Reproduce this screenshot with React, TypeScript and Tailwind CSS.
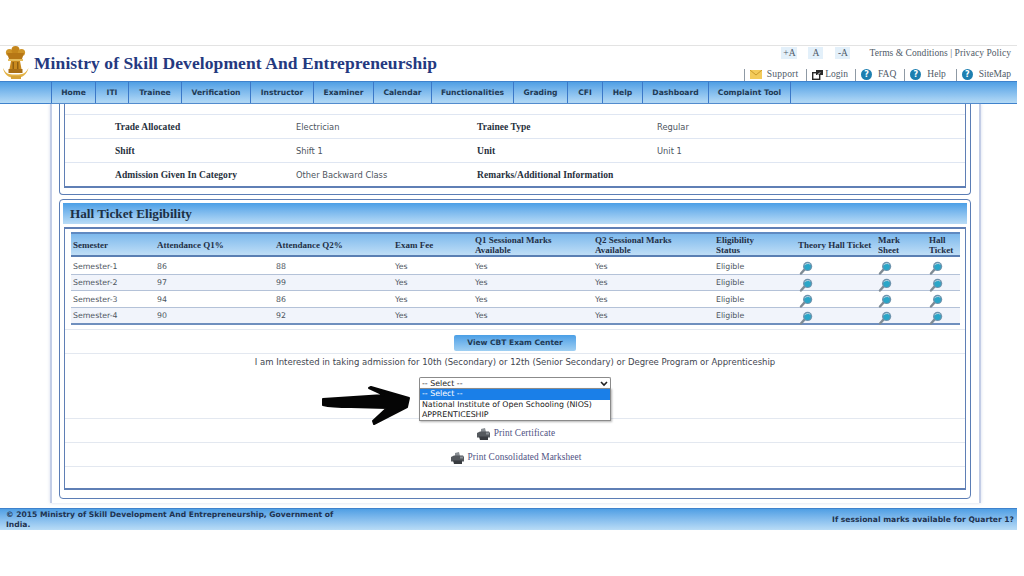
const serif = "font-['Liberation_Serif',serif]";
const sans = "font-['DejaVu_Sans',sans-serif]";

const navItems = [
  { label: "Home", w: "w-[44px]" },
  { label: "ITI", w: "w-[33px]" },
  { label: "Trainee", w: "w-[53px]" },
  { label: "Verification", w: "w-[69px]" },
  { label: "Instructor", w: "w-[63px]" },
  { label: "Examiner", w: "w-[60px]" },
  { label: "Calendar", w: "w-[58px]" },
  { label: "Functionalities", w: "w-[82px]" },
  { label: "Grading", w: "w-[54px]" },
  { label: "CFI", w: "w-[35px]" },
  { label: "Help", w: "w-[40px]" },
  { label: "Dashboard", w: "w-[66px]" },
  { label: "Complaint Tool", w: "w-[82px]" },
];

const semesters = [
  { name: "Semester-1", q1: "86", q2: "88" },
  { name: "Semester-2", q1: "97", q2: "99" },
  { name: "Semester-3", q1: "94", q2: "86" },
  { name: "Semester-4", q1: "90", q2: "92" },
];

const cols =
  "grid grid-cols-[84px_119px_119px_80px_120px_121px_82px_80px_51px_33px]";

function Emblem() {
  return (
    <svg width="27" height="34" viewBox="0 0 27 34" className="shrink-0">
      <circle cx="7.500" cy="6.500" r="3.600" fill="#cf9528" />
      <circle cx="13.500" cy="4" r="4" fill="#c4861c" />
      <circle cx="19.500" cy="6.500" r="3.600" fill="#cf9528" />
      <path d="M5 7h17l-2 6H7z" fill="#b67716" />
      <path d="M6 13h15v2H6z" fill="#e6bd5c" />
      <path d="M9 15h9l1.500 8h-12z" fill="#c98a1e" />
      <path d="M10.500 16h1.500v7h-1.500zM15 16h1.500v7H15z" fill="#8f5f12" />
      <path d="M6.500 23h14v4h-14z" fill="#a86f16" />
      <path d="M1 22c1 6 5 10 12.500 10S25 28 26.500 22c-2 3-3.500 5.500-6.500 6-4 .7-9 .7-13 0-3-.5-4-3-6-6z" fill="#e3b244" />
      <path d="M9 30h10v3H9z" fill="#d6a338" />
    </svg>
  );
}

function Magnifier() {
  return (
    <svg width="14" height="14" viewBox="0 0 14 14">
      <path d="M2 12.500l3.200-3.600" stroke="#7f8c96" strokeWidth="2.400" strokeLinecap="round" />
      <circle cx="8.600" cy="5.400" r="4.600" fill="#6d93ad" />
      <circle cx="8.600" cy="5.800" r="3.200" fill="#2aa6c8" />
      <path d="M5.600 4.200c.8-1.500 3.500-2.400 5.600-1" stroke="#b9d6e4" strokeWidth="1" fill="none" />
    </svg>
  );
}

function Printer() {
  return (
    <svg width="13" height="12" viewBox="0 0 13 12">
      <path d="M4 1l4-1 1 4H4z" fill="#8a8f94" />
      <path d="M0 5l3-1.500h9l1 1.500v4.500H0z" fill="#55595e" />
      <path d="M2 8.500h9V12H3z" fill="#383b40" />
      <path d="M9 4.500h3v2H9z" fill="#8b9096" />
    </svg>
  );
}

function HelpIcon() {
  return (
    <span className={`flex h-[11px] w-[11px] items-center justify-center rounded-full bg-[#1d7fb0] text-[8px] font-bold leading-none text-white ${sans}`}>
      ?
    </span>
  );
}

function MailIcon() {
  return (
    <svg width="12" height="9" viewBox="0 0 12 9">
      <rect width="12" height="9" fill="#f3cb5a" />
      <path d="M0 0l6 5 6-5" stroke="#c99a2c" strokeWidth="1" fill="none" />
    </svg>
  );
}

function LoginIcon() {
  return (
    <svg width="11" height="10" viewBox="0 0 11 10">
      <rect x="0.700" y="2.700" width="7" height="6.600" fill="#fff" stroke="#2a2a2a" strokeWidth="1.400" />
      <rect x="4" y="0" width="7" height="5" fill="#2a2a2a" />
      <path d="M5 5.500l3-3" stroke="#fff" strokeWidth="1" />
    </svg>
  );
}

function Sep({ className }: { className: string }) {
  return <span className={`h-[12px] w-px bg-[#8f9aa5] ${className}`} />;
}

function Header() {
  return (
    <header className="flex h-[36px] w-[1017px] justify-between border-t border-[#e3e3e3] pl-[2px] pr-[6px]">
      <div className="flex items-start">
        <Emblem />
        <h1 className={`ml-[5px] mt-[7px] text-[17.500px] leading-[20px] font-bold tracking-[0.09px] text-[#24397f] ${serif}`}>
          Ministry of Skill Development And Entrepreneurship
        </h1>
      </div>
      <div className={`flex flex-col items-end text-[#4f5a68] ${serif}`}>
        <div className="mt-[1px] flex h-[12px] items-center text-[9.500px]">
          <span className="flex h-[12px] w-[16px] items-center justify-center bg-[#e3f0fa]">+A</span>
          <span className="ml-[11px] flex h-[12px] w-[15px] items-center justify-center bg-[#e3f0fa]">A</span>
          <span className="ml-[12px] flex h-[12px] w-[15px] items-center justify-center bg-[#e3f0fa]">-A</span>
          <span className="ml-[19px] tracking-[0.05px]">Terms &amp; Conditions | Privacy Policy</span>
        </div>
        <div className="mt-[9px] flex h-[13px] items-center text-[9.500px]">
          <Sep className="mr-[5px]" />
          <MailIcon />
          <span className="ml-[5px] tracking-[0.2px]">Support</span>
          <Sep className="ml-[8px] mr-[5px]" />
          <LoginIcon />
          <span className="ml-[2px]">Login</span>
          <Sep className="ml-[7px] mr-[5px]" />
          <HelpIcon />
          <span className="ml-[6px]">FAQ</span>
          <Sep className="ml-[8px] mr-[5px]" />
          <HelpIcon />
          <span className="ml-[6px]">Help</span>
          <Sep className="ml-[10px] mr-[5px]" />
          <HelpIcon />
          <span className="ml-[6px]">SiteMap</span>
        </div>
      </div>
    </header>
  );
}

function Nav() {
  return (
    <nav className="flex h-[23px] w-[1017px] border-y border-[#3f82cc] bg-gradient-to-b from-[#4f9fe4] to-[#b4daf6] pl-[51px]">
      {navItems.map((item) => (
        <div
          key={item.label}
          className={`flex items-center justify-center border-l border-[#3b78c8] text-[7.600px] font-bold text-[#1f3a55] ${sans} ${item.w}`}
        >
          {item.label}
        </div>
      ))}
      <div className="border-l border-[#3b78c8]" />
    </nav>
  );
}

function InfoRow({ a, b, c, d }: { a: string; b: string; c: string; d?: string }) {
  return (
    <div className="grid h-[24px] grid-cols-[181px_181px_180px_1fr] items-center border-t border-[#dfe6f2] pl-[50px] pt-[2px]">
      <span className={`text-[9.500px] font-bold tracking-[0.05px] text-[#26303c] ${serif}`}>{a}</span>
      <span className={`text-[8.300px] text-[#4d5560] ${sans}`}>{b}</span>
      <span className={`text-[9.500px] font-bold tracking-[0.05px] text-[#26303c] ${serif}`}>{c}</span>
      <span className={`text-[8.300px] text-[#4d5560] ${sans}`}>{d}</span>
    </div>
  );
}

function HallTable() {
  const head = `flex items-center text-[9px] font-bold leading-[10px] text-[#1f2f46] ${serif}`;
  return (
    <div className="ml-[6px] mr-[5px] border-b-2 border-[#6f8fbe]">
      <div className={`${cols} h-[25px] border-y-2 border-t-[#5f8ac2] border-b-[#5a7fb3] bg-gradient-to-b from-[#7db9ec] to-[#bfdef6] pl-[2px]`}>
        <span className={head}>Semester</span>
        <span className={head}>Attendance Q1%</span>
        <span className={head}>Attendance Q2%</span>
        <span className={head}>Exam Fee</span>
        <span className={head}>Q1 Sessional Marks<br />Available</span>
        <span className={head}>Q2 Sessional Marks<br />Available</span>
        <span className={head}>Eligibility<br />Status</span>
        <span className={head}>Theory Hall Ticket</span>
        <span className={head}>Mark<br />Sheet</span>
        <span className={head}>Hall<br />Ticket</span>
      </div>
      {semesters.map((s, i) => (
        <div
          key={s.name}
          className={`${cols} h-[16.500px] items-center border-t pl-[2px] text-[7.800px] text-[#4d5560] ${sans} ${i % 2 ? "bg-[#f1f4fb]" : "bg-white"} ${i ? "border-[#b4c2d8]" : "border-transparent"}`}
        >
          <span>{s.name}</span>
          <span>{s.q1}</span>
          <span>{s.q2}</span>
          <span>Yes</span>
          <span>Yes</span>
          <span>Yes</span>
          <span>Eligible</span>
          <span className="pl-[1px] pt-[3px]"><Magnifier /></span>
          <span className="pt-[3px]"><Magnifier /></span>
          <span className="pt-[3px]"><Magnifier /></span>
        </div>
      ))}
    </div>
  );
}

function HandArrow() {
  return (
    <svg
      width="92"
      height="42"
      viewBox="0 0 92 42"
      className="absolute left-[-98px] top-[8px]"
    >
      <path
        d="M2 14L63 10L48 3L50 2L88 13L86 22L53 39L52 36L66 23L30 22Q10 22 2 20Z"
        fill="#050505"
        stroke="#050505"
        strokeWidth="2"
        strokeLinejoin="round"
      />
    </svg>
  );
}

function SelectBox() {
  return (
    <div className={`relative w-[192px] text-[7.850px] text-[#222] ${sans}`}>
      <HandArrow />
      <div className="flex h-[12px] items-center justify-between rounded-t-[2px] border border-b-0 border-[#8b8b8b] bg-white pl-[2px] pr-[2px]">
        <span>-- Select --</span>
        <svg width="8" height="6" viewBox="0 0 8 6">
          <path d="M1 1l3 3 3-3" stroke="#222" strokeWidth="1.600" fill="none" />
        </svg>
      </div>
      <div className="absolute left-0 top-[11px] z-10 w-full border border-[#8b8b8b] bg-white leading-[10.500px] shadow-[1px_1px_2px_rgba(0,0,0,0.3)]">
        <div className="h-[11px] bg-[#1a7fe8] pl-[2px] text-white">-- Select --</div>
        <div className="h-[10px] pl-[2px]">National Institute of Open Schooling (NIOS)</div>
        <div className="h-[10px] pl-[2px]">APPRENTICESHIP</div>
      </div>
    </div>
  );
}

function PrintRow({ label }: { label: string }) {
  return (
    <div className="flex h-[24px] items-center justify-center gap-[4px] border-t border-[#e3e8f0] pl-[2px] pt-[6px]">
      <Printer />
      <span className={`text-[9.300px] tracking-[0.1px] text-[#4f5283] ${serif}`}>{label}</span>
    </div>
  );
}

export default function App() {
  return (
    <div className="h-[576px] w-[1024px] overflow-hidden bg-white pt-[45px]">
      <Header />
      <Nav />
      <main className="ml-[50px] h-[399px] w-[931px] border-x-2 border-[#c3cde6] pl-[7px] pr-[8px] shadow-[0_0_3px_rgba(170,185,220,0.5)]">
        <section className="h-[91px] rounded-b-[4px] border-x border-b border-[#5b7db5] px-[4px] pb-[6px]">
          <div className="flex h-full flex-col justify-end border-x border-b-2 border-[#5f7fb5]">
            <InfoRow a="Trade Allocated" b="Electrician" c="Trainee Type" d="Regular" />
            <InfoRow a="Shift" b="Shift 1" c="Unit" d="Unit 1" />
            <InfoRow a="Admission Given In Category" b="Other Backward Class" c="Remarks/Additional Information" />
          </div>
        </section>

        <section className="mt-[4px] h-[300px] rounded-[4px] border border-[#5b7db5] px-[3px] pb-[6px] pt-[3px]">
          <h2 className={`flex h-[21px] items-center bg-gradient-to-b from-[#4a9fe6] to-[#b9dcf6] pl-[7px] pt-[1px] text-[13.200px] font-bold text-[#1c3044] ${serif}`}>
            Hall Ticket Eligibility
          </h2>
          <div className="mx-[1px] mt-[3px] h-[263px] border-x border-y-2 border-x-[#5f7fb5] border-y-[#5f7fb5] pt-[3px]">
            <HallTable />
            <div className="mt-[4px] flex h-[24px] items-center justify-center border-t border-[#e3e8f0] pt-[2px]">
              <button className={`h-[16px] w-[122px] rounded-[2px] bg-gradient-to-b from-[#4a9fe6] to-[#9fcff2] text-[7.500px] font-bold text-[#1f3a55] ${sans}`}>
                View CBT Exam Center
              </button>
            </div>
            <div className="flex h-[65px] flex-col items-center border-t border-[#e3e8f0]">
              <p className={`mt-[2px] text-[8.500px] leading-[12px] text-[#3f4650] ${sans}`}>
                I am Interested in taking admission for 10th (Secondary) or 12th (Senior Secondary) or Degree Program or Apprenticeship
              </p>
              <div className="mt-[9px]">
                <SelectBox />
              </div>
            </div>
            <PrintRow label="Print Certificate" />
            <PrintRow label="Print Consolidated Marksheet" />
            <div className="border-t border-[#e3e8f0]" />
          </div>
        </section>
      </main>
      <footer className={`mt-[5px] flex h-[22px] w-[1017px] items-center justify-between border-t border-[#3f82cc] bg-gradient-to-b from-[#4f9fe4] to-[#b9dcf6] pl-[6px] pr-[3px] pt-[1px] text-[7.600px] font-bold leading-[10px] text-[#1f3350] ${sans}`}>
        <span className="w-[340px]">
          © 2015 Ministry of Skill Development And Entrepreneurship, Government of India.
        </span>
        <span>If sessional marks available for Quarter 1?</span>
      </footer>
    </div>
  );
}
